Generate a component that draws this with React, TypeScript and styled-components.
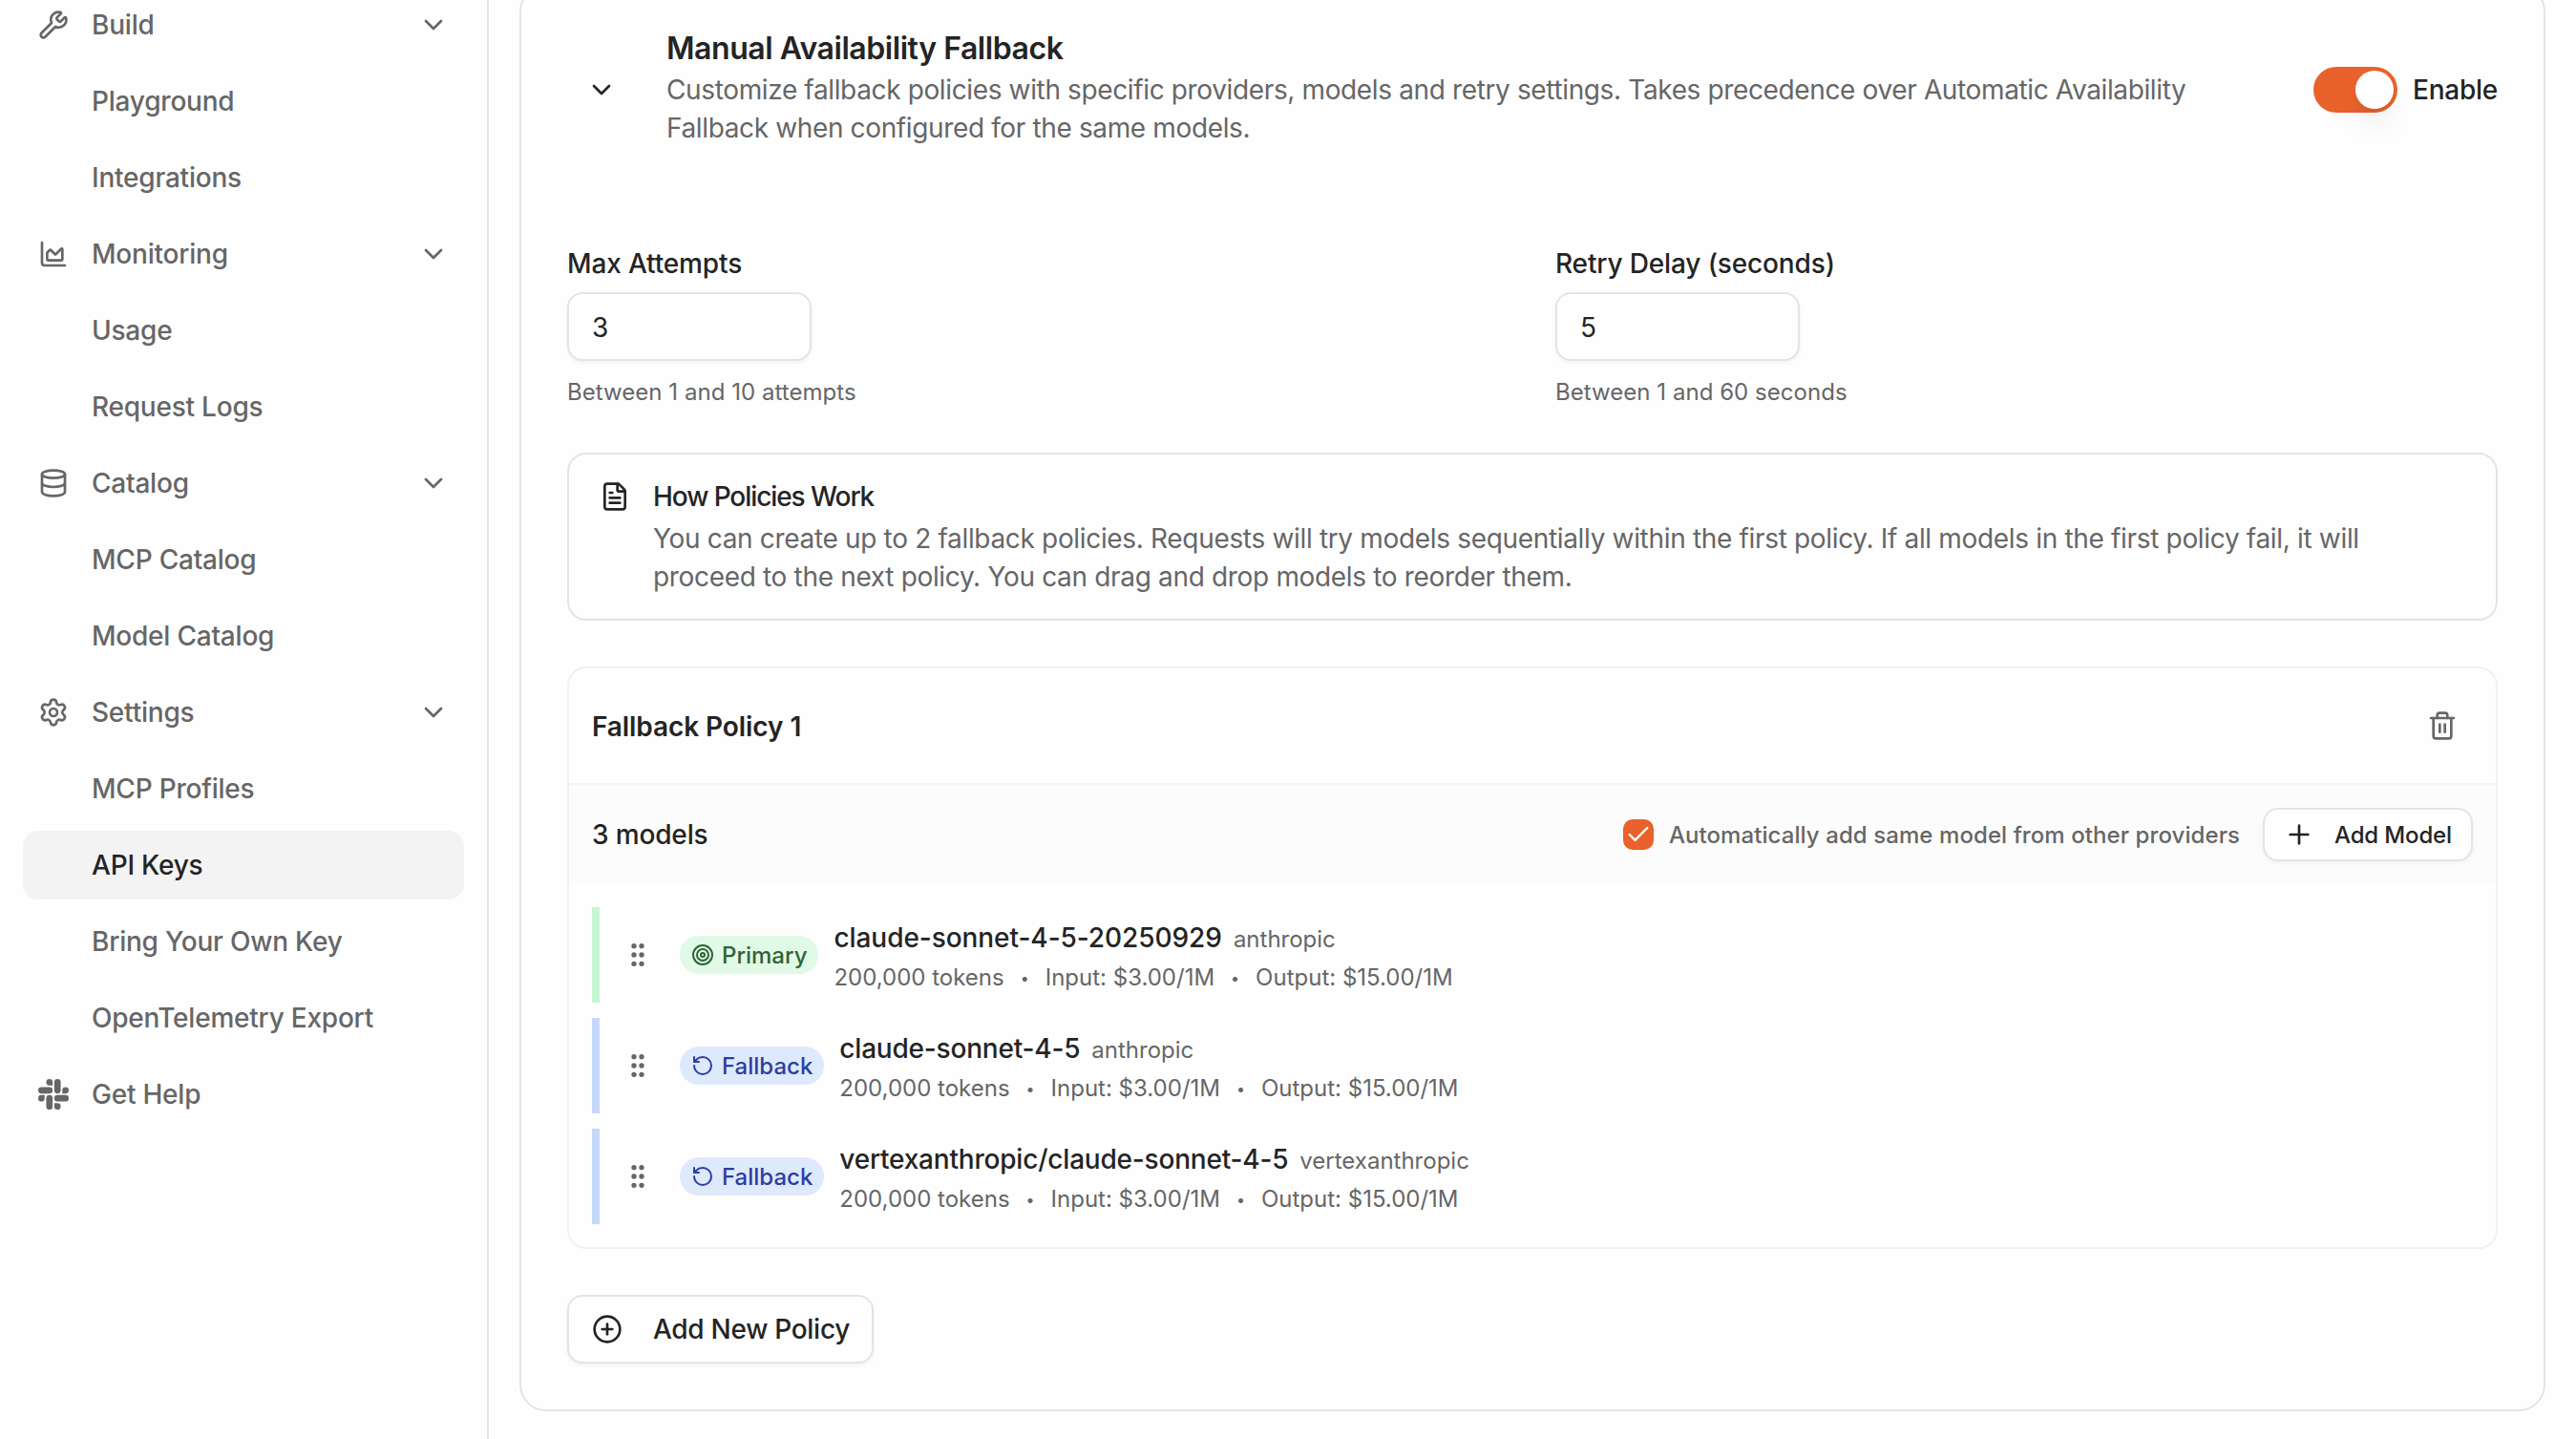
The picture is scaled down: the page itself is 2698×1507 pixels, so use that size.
import React from "react";
import styled, { createGlobalStyle, css } from "styled-components";
import {
  ChartArea,
  Check,
  ChevronDown,
  CirclePlus,
  Database,
  FileText,
  GripVertical,
  Plus,
  RotateCcw,
  Settings,
  Target,
  Trash2,
  Wrench,
} from "lucide-react";

const color = {
  bg: "#fefefe",
  text: "#242424",
  muted: "#666666",
  border: "#e4e4e4",
  softBorder: "#f1f1f1",
  accent: "#e9622b",
};

const GlobalStyle = createGlobalStyle`
  * { box-sizing: border-box; }
  body {
    margin: 0;
    background: ${color.bg};
    color: ${color.text};
    font-family: Inter, "Liberation Sans", sans-serif;
    font-size: 28px;
    -webkit-font-smoothing: antialiased;
  }
  button, input { font: inherit; color: inherit; letter-spacing: inherit; }
  h2, h3, p { margin: 0; }
  svg { display: block; flex: none; }
`;

const Page = styled.div`
  display: flex;
  align-items: flex-start;
  width: 2698px;
  height: 1507px;
  overflow: hidden;
`;

const Sidebar = styled.nav`
  flex: none;
  width: 512px;
  height: 1517px;
  margin-top: -10px;
  padding: 0 24px;
  border-right: 2px solid ${color.border};
  display: flex;
  flex-direction: column;
  gap: 8px;
`;

const NavRow = styled.a<{ $active?: boolean }>`
  display: flex;
  align-items: center;
  gap: 24px;
  height: 72px;
  padding: 0 16px;
  border-radius: 16px;
  font-weight: 500;
  letter-spacing: -0.22px;
  line-height: 40px;
  color: ${(p) => (p.$active ? color.text : color.muted)};
  background: ${(p) => (p.$active ? "#f3f3f3" : "transparent")};
`;

const NavIcon = styled.span`
  flex: none;
  width: 32px;
  height: 32px;
`;

const NavLabel = styled.span`
  flex: 1;
  white-space: nowrap;
`;

const Main = styled.main`
  flex: 1;
  padding: 0 32px;
`;

const Card = styled.section`
  width: 2122px;
  height: 1494px;
  margin-top: -16px;
  padding: 48px;
  border: 2px solid ${color.border};
  border-radius: 28px;
`;

const CardHeader = styled.header`
  display: flex;
  align-items: center;
  height: 120px;
  margin-bottom: 108px;
`;

const CollapseButton = styled.button`
  display: flex;
  align-items: center;
  justify-content: center;
  width: 72px;
  height: 72px;
  margin-right: 32px;
  padding: 0;
  border: 0;
  background: none;
`;

const HeaderText = styled.div`
  flex: 1;
`;

const CardTitle = styled.h2`
  height: 40px;
  padding-top: 1px;
  font-size: 32px;
  font-weight: 600;
  line-height: 32px;
  letter-spacing: -0.44px;
`;

const Body = styled.p`
  font-size: 28px;
  line-height: 40px;
  letter-spacing: -0.33px;
  color: ${color.muted};
  white-space: nowrap;
`;

const CardDescription = styled(Body)`
  letter-spacing: -0.366px;
`;

const ToggleField = styled.label`
  display: flex;
  align-items: center;
  gap: 16px;
  font-weight: 500;
  line-height: 40px;
  letter-spacing: -0.25px;
`;

const Track = styled.span`
  display: flex;
  justify-content: flex-end;
  width: 88px;
  height: 48px;
  padding: 4px;
  border-radius: 24px;
  background: ${color.accent};
`;

const Thumb = styled.span`
  width: 40px;
  height: 40px;
  border-radius: 50%;
  background: #fff;
  box-shadow: 0 20px 30px -6px rgba(0, 0, 0, 0.1), 0 8px 12px -8px rgba(0, 0, 0, 0.1);
`;

const FieldGrid = styled.div`
  display: grid;
  grid-template-columns: 1fr 1fr;
  gap: 48px;
  margin-bottom: 48px;
`;

const Field = styled.div`
  display: flex;
  flex-direction: column;
  gap: 16px;
`;

const FieldLabel = styled.label`
  font-weight: 500;
  line-height: 28px;
  letter-spacing: -0.14px;
`;

const outlined = css`
  background: ${color.bg};
  border: 2px solid ${color.border};
  border-radius: 16px;
  box-shadow: 0 2px 4px rgba(0, 0, 0, 0.05);
`;

const NumberInput = styled.input`
  ${outlined}
  width: 256px;
  height: 72px;
  padding: 2px 24px 0;
  outline: none;
`;

const Hint = styled.p`
  height: 32px;
  padding-top: 1px;
  font-size: 24px;
  line-height: 32px;
  letter-spacing: 0.04px;
  color: ${color.muted};
`;

const InfoBox = styled.div`
  display: flex;
  gap: 24px;
  height: 176px;
  margin-bottom: 48px;
  padding: 24px 32px;
  border: 2px solid ${color.border};
  border-radius: 20px;

  svg { margin-top: 4px; }
`;

const InfoTitle = styled.h3`
  font-size: 28px;
  font-weight: 500;
  line-height: 40px;
  letter-spacing: -1.08px;
  margin-bottom: 4px;
`;

const Policy = styled.section`
  margin-bottom: 48px;
  border: 2px solid ${color.softBorder};
  border-radius: 20px;
  overflow: hidden;
`;

const PolicyHeader = styled.div`
  display: flex;
  align-items: center;
  justify-content: space-between;
  height: 122px;
  padding: 0 24px;
  border-bottom: 2px solid #f4f4f4;
`;

const PolicyTitle = styled.h3`
  padding-top: 2px;
  font-size: 28px;
  font-weight: 600;
  line-height: 40px;
  letter-spacing: -0.08px;
`;

const IconButton = styled.button`
  display: flex;
  align-items: center;
  justify-content: center;
  width: 64px;
  height: 64px;
  padding: 0;
  border: 0;
  background: none;
  color: ${color.muted};
`;

const PolicyBar = styled.div`
  display: flex;
  align-items: center;
  height: 104px;
  padding: 0 24px;
  background: #fcfcfc;
`;

const ModelCount = styled.span`
  flex: 1;
  font-weight: 500;
  letter-spacing: -0.15px;
`;

const CheckField = styled.label`
  display: flex;
  align-items: center;
  gap: 16px;
  margin-right: 24px;
  font-size: 24px;
  font-weight: 500;
  letter-spacing: 0.08px;
  color: ${color.muted};
  white-space: nowrap;
`;

const CheckMark = styled.span`
  display: flex;
  align-items: center;
  justify-content: center;
  width: 32px;
  height: 32px;
  border-radius: 10px;
  background: ${color.accent};
  color: #fff;
`;

const OutlineButton = styled.button<{ $size: "small" | "large" }>`
  ${outlined}
  display: inline-flex;
  align-items: center;
  white-space: nowrap;
  font-weight: 500;
  ${(p) =>
    p.$size === "small"
      ? css`
          gap: 21px;
          width: 220px;
          height: 56px;
          padding: 0 20px;
          font-size: 24px;
          letter-spacing: -0.15px;
        `
      : css`
          gap: 32px;
          width: 321px;
          height: 72px;
          padding: 0 24px;
          font-size: 28px;
          letter-spacing: -0.29px;
        `}
`;

const ModelList = styled.div`
  display: flex;
  flex-direction: column;
  gap: 16px;
  padding: 24px;
`;

type Role = "primary" | "fallback";

const roleColor = {
  primary: { bar: "#c6f6d3", bg: "#e0fae6", text: "#2f6339" },
  fallback: { bar: "#c4d8f9", bg: "#dee9fc", text: "#2a3ea3" },
};

const ModelRow = styled.div<{ $role: Role }>`
  display: flex;
  align-items: center;
  height: 100px;
  padding-left: 24px;
  border-left: 8px solid ${(p) => roleColor[p.$role].bar};
`;

const Handle = styled.span`
  margin-right: 28px;
  color: ${color.muted};
`;

const Badge = styled.span<{ $role: Role }>`
  display: inline-flex;
  align-items: center;
  gap: 8px;
  height: 40px;
  margin-right: 16px;
  padding: 0 12px;
  border-radius: 20px;
  font-size: 24px;
  font-weight: 500;
  background: ${(p) => roleColor[p.$role].bg};
  color: ${(p) => roleColor[p.$role].text};
`;

const ModelText = styled.div`
  display: flex;
  flex-direction: column;
  gap: 4px;
`;

const ModelTitle = styled.div`
  display: flex;
  align-items: baseline;
  gap: 12px;
  height: 40px;
  line-height: 40px;
`;

const ModelName = styled.span<{ $role: Role }>`
  font-weight: 500;
  letter-spacing: ${(p) => (p.$role === "primary" ? "-0.06px" : "-0.2px")};
`;

const Muted = styled.span`
  font-size: 24px;
  color: ${color.muted};
`;

const ModelMeta = styled.div`
  display: flex;
  align-items: center;
  gap: 16px;
  height: 32px;
  padding-top: 3px;
  line-height: 32px;
`;

const Dot = styled.span`
  width: 11px;
  text-align: center;
  font-size: 16px;
  color: ${color.muted};
`;

const SlackIcon = () => (
  <svg width="32" height="32" viewBox="0 0 24 24" fill="currentColor">
    <path d="M5.042 15.165a2.528 2.528 0 0 1-2.52 2.523A2.528 2.528 0 0 1 0 15.165a2.527 2.527 0 0 1 2.522-2.52h2.52v2.52zM6.313 15.165a2.527 2.527 0 0 1 2.521-2.52 2.527 2.527 0 0 1 2.521 2.52v6.313A2.528 2.528 0 0 1 8.834 24a2.528 2.528 0 0 1-2.521-2.522v-6.313z" />
    <path d="M8.834 5.042a2.528 2.528 0 0 1-2.521-2.52A2.528 2.528 0 0 1 8.834 0a2.528 2.528 0 0 1 2.521 2.522v2.52H8.834zM8.834 6.313a2.528 2.528 0 0 1 2.521 2.521 2.528 2.528 0 0 1-2.521 2.521H2.522A2.528 2.528 0 0 1 0 8.834a2.528 2.528 0 0 1 2.522-2.521h6.312z" />
    <path d="M18.956 8.834a2.528 2.528 0 0 1 2.522-2.521A2.528 2.528 0 0 1 24 8.834a2.528 2.528 0 0 1-2.522 2.521h-2.522V8.834zM17.688 8.834a2.528 2.528 0 0 1-2.523 2.521 2.527 2.527 0 0 1-2.52-2.521V2.522A2.527 2.527 0 0 1 15.165 0a2.528 2.528 0 0 1 2.523 2.522v6.312z" />
    <path d="M15.165 18.956a2.528 2.528 0 0 1 2.523 2.522A2.528 2.528 0 0 1 15.165 24a2.527 2.527 0 0 1-2.52-2.522v-2.522h2.52zM15.165 17.688a2.527 2.527 0 0 1-2.52-2.523 2.526 2.526 0 0 1 2.52-2.52h6.313A2.527 2.527 0 0 1 24 15.165a2.528 2.528 0 0 1-2.522 2.523h-6.313z" />
  </svg>
);

type NavItem = { label: string; icon?: React.ReactNode; group?: boolean; active?: boolean };

const nav: NavItem[] = [
  { label: "Build", icon: <Wrench size={32} />, group: true },
  { label: "Playground" },
  { label: "Integrations" },
  { label: "Monitoring", icon: <ChartArea size={32} />, group: true },
  { label: "Usage" },
  { label: "Request Logs" },
  { label: "Catalog", icon: <Database size={32} />, group: true },
  { label: "MCP Catalog" },
  { label: "Model Catalog" },
  { label: "Settings", icon: <Settings size={32} />, group: true },
  { label: "MCP Profiles" },
  { label: "API Keys", active: true },
  { label: "Bring Your Own Key" },
  { label: "OpenTelemetry Export" },
  { label: "Get Help", icon: <SlackIcon /> },
];

const models: { role: Role; name: string; provider: string }[] = [
  { role: "primary", name: "claude-sonnet-4-5-20250929", provider: "anthropic" },
  { role: "fallback", name: "claude-sonnet-4-5", provider: "anthropic" },
  { role: "fallback", name: "vertexanthropic/claude-sonnet-4-5", provider: "vertexanthropic" },
];

export default function App() {
  return (
    <>
      <GlobalStyle />
      <Page>
        <Sidebar>
          {nav.map((item) => (
            <NavRow key={item.label} $active={item.active}>
              <NavIcon>{item.icon}</NavIcon>
              <NavLabel>{item.label}</NavLabel>
              {item.group && <ChevronDown size={32} />}
            </NavRow>
          ))}
        </Sidebar>
        <Main>
          <Card>
            <CardHeader>
              <CollapseButton aria-label="Collapse">
                <ChevronDown size={32} />
              </CollapseButton>
              <HeaderText>
                <CardTitle>Manual Availability Fallback</CardTitle>
                <CardDescription>
                  Customize fallback policies with specific providers, models and retry settings. Takes precedence over Automatic Availability
                  <br />
                  Fallback when configured for the same models.
                </CardDescription>
              </HeaderText>
              <ToggleField>
                <Track>
                  <Thumb />
                </Track>
                Enable
              </ToggleField>
            </CardHeader>

            <FieldGrid>
              <Field>
                <FieldLabel>Max Attempts</FieldLabel>
                <NumberInput defaultValue="3" />
                <Hint>Between 1 and 10 attempts</Hint>
              </Field>
              <Field>
                <FieldLabel>Retry Delay (seconds)</FieldLabel>
                <NumberInput defaultValue="5" />
                <Hint>Between 1 and 60 seconds</Hint>
              </Field>
            </FieldGrid>

            <InfoBox>
              <FileText size={32} />
              <div>
                <InfoTitle>How Policies Work</InfoTitle>
                <Body>
                  You can create up to 2 fallback policies. Requests will try models sequentially within the first policy. If all models in the first policy fail, it will
                  <br />
                  proceed to the next policy. You can drag and drop models to reorder them.
                </Body>
              </div>
            </InfoBox>

            <Policy>
              <PolicyHeader>
                <PolicyTitle>Fallback Policy 1</PolicyTitle>
                <IconButton aria-label="Delete policy">
                  <Trash2 size={32} />
                </IconButton>
              </PolicyHeader>
              <PolicyBar>
                <ModelCount>3 models</ModelCount>
                <CheckField>
                  <CheckMark>
                    <Check size={28} />
                  </CheckMark>
                  Automatically add same model from other providers
                </CheckField>
                <OutlineButton $size="small">
                  <Plus size={32} />
                  Add Model
                </OutlineButton>
              </PolicyBar>
              <ModelList>
                {models.map((m) => (
                  <ModelRow key={m.name} $role={m.role}>
                    <Handle>
                      <GripVertical size={32} />
                    </Handle>
                    <Badge $role={m.role}>
                      {m.role === "primary" ? <Target size={24} /> : <RotateCcw size={24} />}
                      {m.role === "primary" ? "Primary" : "Fallback"}
                    </Badge>
                    <ModelText>
                      <ModelTitle>
                        <ModelName $role={m.role}>{m.name}</ModelName>
                        <Muted>{m.provider}</Muted>
                      </ModelTitle>
                      <ModelMeta>
                        <Muted>200,000 tokens</Muted>
                        <Dot>•</Dot>
                        <Muted>Input: $3.00/1M</Muted>
                        <Dot>•</Dot>
                        <Muted>Output: $15.00/1M</Muted>
                      </ModelMeta>
                    </ModelText>
                  </ModelRow>
                ))}
              </ModelList>
            </Policy>

            <OutlineButton $size="large">
              <CirclePlus size={32} />
              Add New Policy
            </OutlineButton>
          </Card>
        </Main>
      </Page>
    </>
  );
}
